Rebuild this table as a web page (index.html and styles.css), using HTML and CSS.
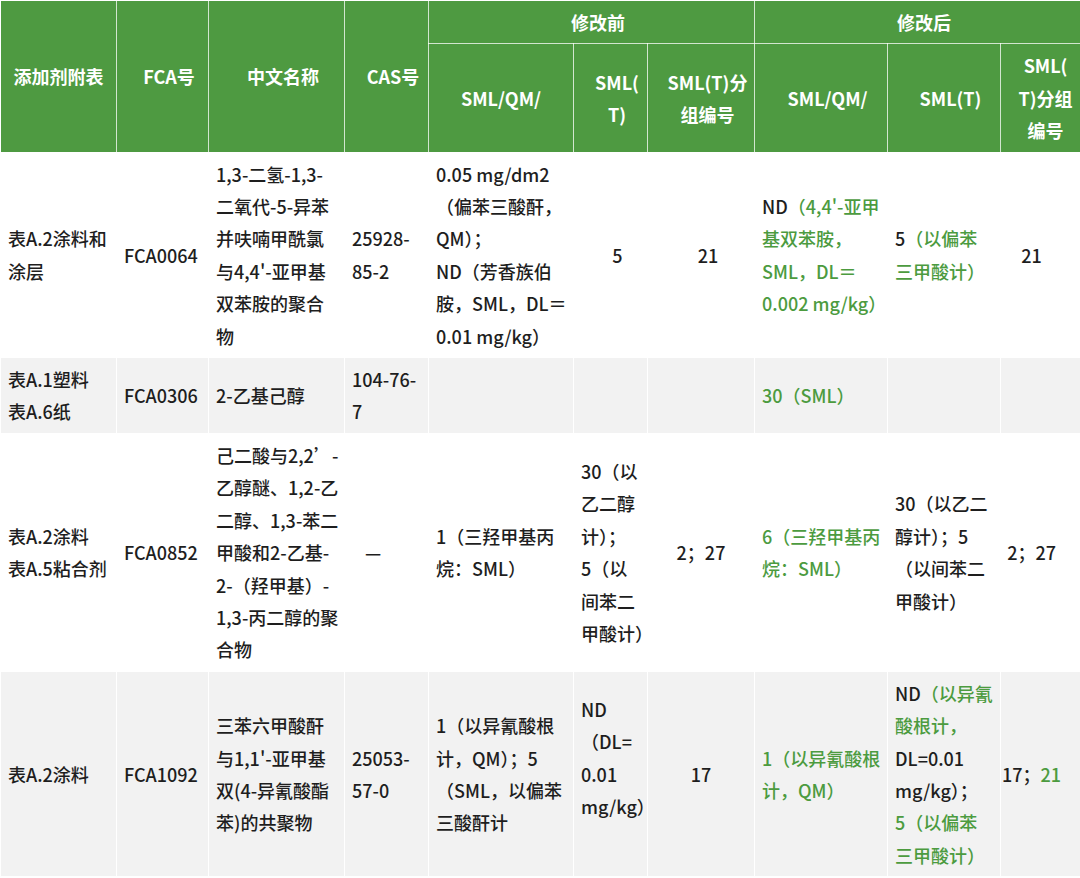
FILE: index.html
```html
<!DOCTYPE html>
<html lang="zh-CN">
<head>
<meta charset="utf-8">
<title>添加剂附表修改对照</title>
<link rel="stylesheet" href="styles.css">
</head>
<body>
<table class="tbl">
  <colgroup>
    <col class="w116"><col class="w92"><col class="w136"><col class="w84">
    <col class="w145"><col class="w74"><col class="w107">
    <col class="w133"><col class="w113"><col class="w80">
  </colgroup>
  <thead>
    <tr>
      <th rowspan="2" class="first">添加剂附表</th>
      <th rowspan="2">FCA号</th>
      <th rowspan="2">中文名称</th>
      <th rowspan="2">CAS号</th>
      <th colspan="3">修改前</th>
      <th colspan="3">修改后</th>
    </tr>
    <tr>
      <th class="sym">SML/QM/</th>
      <th>SML(<br>T)</th>
      <th>SML(T)分<br>组编号</th>
      <th>SML/QM/</th>
      <th>SML(T)</th>
      <th class="last">SML(<br>T)分组<br>编号</th>
    </tr>
  </thead>
  <tbody>
    <tr>
      <td>表A.2涂料和<br>涂层</td>
      <td>FCA0064</td>
      <td>1,3-二氢-1,3-<br>二氧代-5-异苯<br>并呋喃甲酰氯<br>与4,4'-亚甲基<br>双苯胺的聚合<br>物</td>
      <td>25928-<br>85-2</td>
      <td>0.05 mg/dm2<br>（偏苯三酸酐，<br>QM）；<br>ND（芳香族伯<br>胺，SML，DL＝<br>0.01 mg/kg）</td>
      <td class="c">5</td>
      <td class="c">21</td>
      <td>ND<span class="g">（4,4'-亚甲<br>基双苯胺，<br>SML，DL＝<br>0.002 mg/kg）</span></td>
      <td>5<span class="g">（以偏苯<br>三甲酸计）</span></td>
      <td class="cl">21</td>
    </tr>
    <tr class="alt">
      <td>表A.1塑料<br>表A.6纸</td>
      <td>FCA0306</td>
      <td>2-乙基己醇</td>
      <td>104-76-<br>7</td>
      <td></td>
      <td></td>
      <td></td>
      <td class="g">30（SML）</td>
      <td></td>
      <td></td>
    </tr>
    <tr>
      <td>表A.2涂料<br>表A.5粘合剂</td>
      <td>FCA0852</td>
      <td>己二酸与2,2’-<br>乙醇醚、1,2-乙<br>二醇、1,3-苯二<br>甲酸和2-乙基-<br>2-（羟甲基）-<br>1,3-丙二醇的聚<br>合物</td>
      <td class="dash">—</td>
      <td>1（三羟甲基丙<br>烷：SML）</td>
      <td>30（以<br>乙二醇<br>计）；<br>5（以<br>间苯二<br>甲酸计）</td>
      <td class="c2">2；27</td>
      <td class="g">6（三羟甲基丙<br>烷：SML）</td>
      <td>30（以乙二<br>醇计）；5<br>（以间苯二<br>甲酸计）</td>
      <td class="cl">2；27</td>
    </tr>
    <tr class="alt">
      <td>表A.2涂料</td>
      <td>FCA1092</td>
      <td>三苯六甲酸酐<br>与1,1'-亚甲基<br>双(4-异氰酸酯<br>苯)的共聚物</td>
      <td>25053-<br>57-0</td>
      <td>1（以异氰酸根<br>计，QM）；5<br>（SML，以偏苯<br>三酸酐计</td>
      <td>ND<br>（DL=<br>0.01<br>mg/kg）<br>&nbsp;</td>
      <td class="c2">17</td>
      <td class="g">1（以异氰酸根<br>计，QM）</td>
      <td>ND<span class="g">（以异氰<br>酸根计，</span><br>DL=0.01<br>mg/kg）；<br><span class="g">5（以偏苯<br>三甲酸计）</span></td>
      <td class="cl">17；<span class="g">21</span></td>
    </tr>
  </tbody>
</table>
</body>
</html>
```

FILE: styles.css
```css
html, body {
  margin: 0;
  padding: 0;
  background: #ffffff;
}

body {
  font-family: "Noto Sans CJK SC", "Noto Sans", sans-serif;
  font-size: 18px;
  line-height: 32.4px;
  font-weight: 500;
  color: #1e1e1e;
}

.tbl {
  width: 1080px;
  border-collapse: collapse;
  table-layout: fixed;
}

.w116 { width: 116px; }
.w92 { width: 92px; }
.w136 { width: 136px; }
.w84 { width: 84px; }
.w145 { width: 145px; }
.w74 { width: 74px; }
.w107 { width: 107px; }
.w133 { width: 133px; }
.w113 { width: 113px; }
.w80 { width: 80px; }

.tbl th {
  background: #4e9a41;
  color: #ffffff;
  font-weight: 700;
  text-align: center;
  vertical-align: middle;
  padding: 5px 1px 5px 14px;
  border: 1px solid rgba(255, 255, 255, 0.75);
  white-space: nowrap;
}

.tbl th.first {
  padding-left: 4px;
  padding-right: 4px;
}

.tbl th.sym {
  padding-left: 2px;
  padding-right: 2px;
}

.tbl th.last {
  padding-left: 10px;
  padding-right: 0;
}

.tbl td {
  text-align: left;
  vertical-align: middle;
  padding: 5px 2px 5px 7px;
  border: 1px solid #ffffff;
  white-space: nowrap;
}

.tbl tr.alt td {
  background: #f2f2f2;
}

.tbl td.c {
  text-align: center;
  padding-left: 14px;
  padding-right: 0;
}

.tbl td.c2 {
  text-align: center;
  padding-left: 2px;
  padding-right: 2px;
}

.tbl td.cl {
  text-align: center;
  padding-left: 0;
  padding-right: 18px;
}

.tbl td.dash {
  padding-left: 20px;
}

.g {
  color: #4c9b3f;
}
```
